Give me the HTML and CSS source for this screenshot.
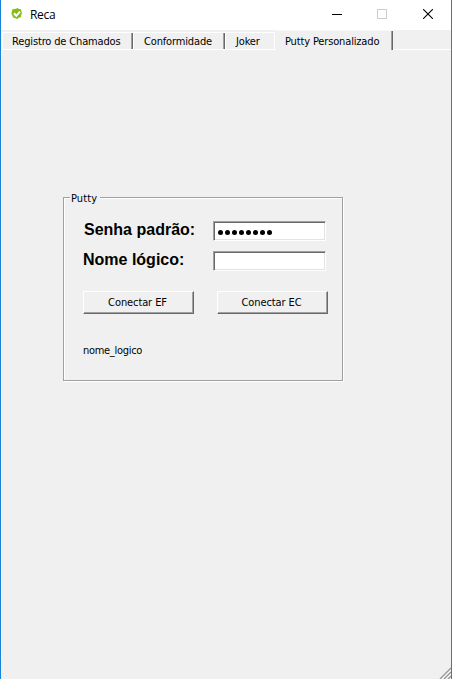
FILE: index.html
```html
<!DOCTYPE html>
<html lang="pt-BR">
<head>
<meta charset="utf-8">
<title>Reca</title>
<link rel="stylesheet" href="styles.css">
</head>
<body>
<div class="window">
  <header class="titlebar">
    <svg class="logo" width="12" height="12" viewBox="0 0 12 12"><path d="M3 1 5 .8 6.500 0 8 1l2 .3.3 2L11 5l-.8 2-.2 2-2 .8L6 11l-2-1-2-.5-.5-2L.3 5.500 1 3.500 1.200 1.500Z" fill="#84bd14"/><path d="m3 5.300 2.300 2.500L9 3.600" fill="none" stroke="#fff" stroke-width="2"/></svg>
    <span class="title">Reca</span>
    <div class="controls">
      <svg width="10" height="10" shape-rendering="crispEdges"><path d="M0 5.500H10" stroke="#000"/></svg>
      <svg width="10" height="10" shape-rendering="crispEdges"><path d="M.5.5h9v9h-9z" fill="none" stroke="#ccc"/></svg>
      <svg width="10" height="10"><path d="m0 0 10 10M10 0 0 10" stroke="#000" stroke-width="1.100"/></svg>
    </div>
  </header>
  <nav class="tabs">
    <div class="tab t1"><span>Registro de Chamados</span></div>
    <div class="tab t2"><span>Conformidade</span></div>
    <div class="tab t3"><span>Joker</span></div>
    <div class="tab t4"><span>Putty Personalizado</span></div>
    <div class="rest"></div>
  </nav>
  <main class="pane">
    <section class="group">
      <div class="legend">Putty</div>
      <div class="row"><label class="l1" for="senha">Senha padrão:</label><div class="input" id="senha"><i></i><i></i><i></i><i></i><i></i><i></i><i></i><i></i></div></div>
      <div class="row"><label class="l2" for="nome">Nome lógico:</label><div class="input" id="nome"></div></div>
      <div class="buttons"><button>Conectar EF</button><button>Conectar EC</button></div>
      <div class="note">nome_logico</div>
    </section>
  </main>
  <svg class="grip" width="12" height="12" viewBox="0 0 12 12"><path d="M1 12 12 1M5 12l7-7M9 12l3-3" stroke="#989898" stroke-width="1.400"/><path d="M3 12l9-9M7 12l5-5" stroke="#fff"/></svg>
</div>
</body>
</html>
```
FILE: styles.css
```css
* { box-sizing: border-box; }
body { margin: 0; font: 11px/13px "DejaVu Sans Condensed", "DejaVu Sans", sans-serif; font-stretch: condensed; color: #000; letter-spacing: -0.15px; }
.window { position: relative; width: 452px; height: 679px; overflow: hidden; display: flex; flex-direction: column; background: #f0f0f0; border-left: 1px solid #1883d7; border-right: 1px solid #1883d7; }
.titlebar { height: 30px; flex: none; display: flex; align-items: center; background: #fff; padding: 0 18px 2px 10px; }
.title { margin-left: 7px; font: 12px/16px "Open Sans", sans-serif; letter-spacing: -0.3px; padding-top: 2px; }
.controls { margin-left: auto; display: flex; gap: 36px; }
.controls svg { display: block; }
.controls svg:first-child { margin-right: -1px; }
.tabs { height: 20px; flex: none; display: flex; align-items: flex-end; padding-left: 1px; white-space: nowrap; }
.tab { height: 18px; border-left: 1px solid #fff; border-top: 1px solid #fff; border-bottom: 1px solid #fff; padding: 2px 0 0 9px; position: relative; }
.tab::after { content: ""; position: absolute; right: 0; top: 0; width: 2px; height: 16px; background: linear-gradient(90deg, #a0a0a0 50%, #696969 50%); }
.t1 { width: 131px; }
.t2 { width: 92px; padding-left: 10px; }
.t3 { width: 50px; padding-left: 10px; border-right: 1px solid #fff; }
.t3::after { display: none; }
.t4 { width: 118px; height: 20px; border-bottom: 0; border-left: 0; border-top-color: #f8f8f8; padding: 4px 0 0 10px; }
.t4::after { height: 19px; }
.rest { flex: 1; height: 1px; background: #fff; }
.pane { flex: 1; padding: 147px 0 0 62px; background: linear-gradient(#fff, #fff) 0 0 / 1px 610px no-repeat; }
.group { width: 280px; height: 184px; border: 1px solid #a0a0a0; box-shadow: inset 1px 1px #fff, 1px 1px #fff; padding: 23px 0 0 19px; position: relative; }
.legend { position: absolute; left: 6px; top: -6px; background: #f0f0f0; width: 30px; padding-left: 1px; height: 13px; letter-spacing: 0.1px; }
.row { display: flex; height: 20px; margin-bottom: 10px; }
.row label { width: 130px; padding-left: 1px; font: bold 16px/18px "Liberation Sans", Arial, sans-serif; letter-spacing: 0; white-space: nowrap; }
.row .l2 { padding-left: 0; }
.input { width: 113px; height: 20px; background: #fff; border: 1px solid; border-color: #a0a0a0 #fff #fff #a0a0a0; box-shadow: inset 1px 1px #696969, inset -1px -1px #e3e3e3; display: flex; gap: 2px; padding: 8px 0 0 4px; }
.input i { width: 5px; height: 5px; border-radius: 50%; background: #000; }
.buttons { display: flex; gap: 23px; margin-top: 20px; }
button { width: 111px; height: 23px; padding: 0 2px 0 0; border: 1px solid; border-color: #fff #696969 #696969 #fff; box-shadow: inset -1px -1px #a0a0a0; background: #f0f0f0; font: inherit; letter-spacing: -0.1px; color: #000; }
.note { margin-top: 30px; letter-spacing: -0.3px; }
.grip { position: absolute; right: 0; bottom: 0; }
```
